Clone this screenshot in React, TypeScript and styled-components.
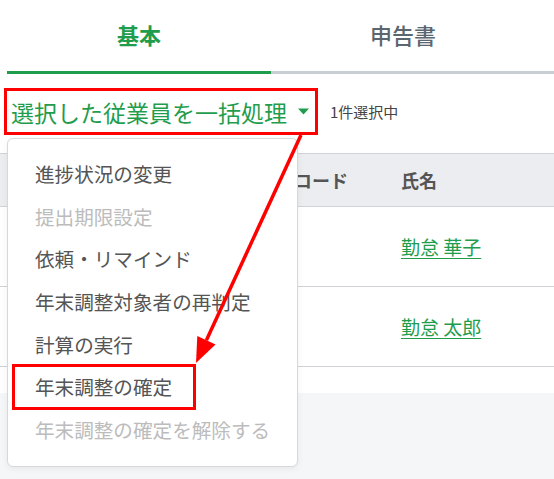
import React from "react";
import styled, { createGlobalStyle } from "styled-components";

const GREEN = "#1f9d4c";
const RED = "#ff0000";

const Global = createGlobalStyle`
  html, body { margin: 0; padding: 0; background: #ffffff; }
  body {
    font-family: "Noto Sans CJK JP", "Noto Sans", sans-serif;
    width: 554px;
    height: 479px;
    overflow: hidden;
  }
`;

const Page = styled.div`
  position: relative;
  width: 554px;
  height: 479px;
  display: flex;
  flex-direction: column;
  background: #ffffff;
`;

const TabBar = styled.div`
  display: flex;
  margin-left: 7px;
  border-bottom: 3px solid #c9ced4;
`;

const Tab = styled.div<{ $active?: boolean }>`
  width: 264px;
  height: 74px;
  padding-bottom: 3px;
  box-sizing: border-box;
  display: flex;
  align-items: center;
  justify-content: center;
  font-size: 22px;
  font-weight: ${(p) => (p.$active ? 700 : 500)};
  color: ${(p) => (p.$active ? GREEN : "#5b6670")};
  border-bottom: 3px solid ${(p) => (p.$active ? GREEN : "transparent")};
  margin-bottom: -3px;
`;

const Toolbar = styled.div`
  position: relative;
  display: flex;
  align-items: center;
  gap: 12px;
  padding: 14px 0 0 4px;
  margin-bottom: 18px;
`;

const BulkButton = styled.div<{ $marked?: boolean }>`
  display: flex;
  align-items: center;
  height: 47px;
  box-sizing: border-box;
  padding: 0 6px 0 4px;
  border: 3px solid ${(p) => (p.$marked ? RED : "transparent")};
  color: ${GREEN};
  font-size: 23px;
  gap: 11px;
  white-space: nowrap;
`;

const Caret = styled.svg`
  width: 11px;
  height: 7px;
  flex: none;
`;

const Count = styled.span`
  font-size: 15px;
  color: #444;
  white-space: nowrap;
`;

const Menu = styled.div`
  position: absolute;
  left: 7px;
  top: 64px;
  width: 291px;
  box-sizing: border-box;
  padding: 14px 0;
  background: #ffffff;
  border: 1px solid #d6d8db;
  border-radius: 6px;
  box-shadow: 0 2px 6px rgba(0, 0, 0, 0.06);
  z-index: 5;
  display: flex;
  flex-direction: column;
`;

const MenuItem = styled.div<{ $disabled?: boolean }>`
  height: 42.7px;
  display: flex;
  align-items: center;
  padding-left: 27px;
  font-size: 19.6px;
  color: ${(p) => (p.$disabled ? "#bcbcbc" : "#555555")};
  white-space: nowrap;
`;

const ItemLabel = styled.span<{ $marked?: boolean }>`
  position: relative;
  line-height: 42.7px;
  &::before {
    content: "";
    display: ${(p) => (p.$marked ? "block" : "none")};
    position: absolute;
    top: -2.6px;
    bottom: -0.5px;
    left: -23px;
    right: -24px;
    border: 3px solid ${RED};
    pointer-events: none;
  }
`;

const Table = styled.div`
  display: flex;
  flex-direction: column;
  padding-bottom: 26px;
  background: #ffffff;
`;

const Row = styled.div<{ $header?: boolean }>`
  display: grid;
  grid-template-columns: 294px 107px 1fr;
  align-items: center;
  height: ${(p) => (p.$header ? "54px" : "80px")};
  box-sizing: border-box;
  border-top: ${(p) => (p.$header ? "1px solid #cfd2d6" : "none")};
  border-bottom: 1px solid #cfd2d6;
  background: ${(p) => (p.$header ? "#ebedf0" : "#ffffff")};
`;

const HeadCell = styled.div`
  font-size: 18px;
  font-weight: 700;
  color: #555;
  white-space: nowrap;
`;

const Cell = styled.div``;

const NameLink = styled.a`
  font-size: 19px;
  color: ${GREEN};
  text-decoration: underline;
  text-underline-offset: 3px;
  white-space: nowrap;
`;

const Footer = styled.div`
  flex: 1;
  background: #f5f6f8;
`;

const Annotation = styled.svg`
  position: absolute;
  left: 0;
  top: 0;
  width: 554px;
  height: 479px;
  pointer-events: none;
  z-index: 10;
`;

const items: { label: string; disabled?: boolean; marked?: boolean }[] = [
  { label: "進捗状況の変更" },
  { label: "提出期限設定", disabled: true },
  { label: "依頼・リマインド" },
  { label: "年末調整対象者の再判定" },
  { label: "計算の実行" },
  { label: "年末調整の確定", marked: true },
  { label: "年末調整の確定を解除する", disabled: true },
];

const people = ["勤怠 華子", "勤怠 太郎"];

export default function App() {
  return (
    <>
      <Global />
      <Page>
        <TabBar>
          <Tab $active>基本</Tab>
          <Tab>申告書</Tab>
        </TabBar>
        <Toolbar>
          <BulkButton $marked>
            選択した従業員を一括処理
            <Caret viewBox="0 0 11 7">
              <path d="M0 0.5 L11 0.5 L5.5 6.5 Z" fill={GREEN} />
            </Caret>
          </BulkButton>
          <Count>1件選択中</Count>
          <Menu>
            {items.map((it) => (
              <MenuItem key={it.label} $disabled={it.disabled}>
                <ItemLabel $marked={it.marked}>{it.label}</ItemLabel>
              </MenuItem>
            ))}
          </Menu>
        </Toolbar>
        <Table>
          <Row $header>
            <HeadCell />
            <HeadCell>コード</HeadCell>
            <HeadCell>氏名</HeadCell>
          </Row>
          {people.map((n) => (
            <Row key={n}>
              <Cell />
              <Cell />
              <Cell>
                <NameLink>{n}</NameLink>
              </Cell>
            </Row>
          ))}
        </Table>
        <Footer />
        <Annotation viewBox="0 0 554 479">
          <line x1="301" y1="135" x2="206.4" y2="340.3" stroke={RED} strokeWidth="3.5" />
          <polygon points="196,363 215.5,344.5 197.3,336.1" fill={RED} />
        </Annotation>
      </Page>
    </>
  );
}
